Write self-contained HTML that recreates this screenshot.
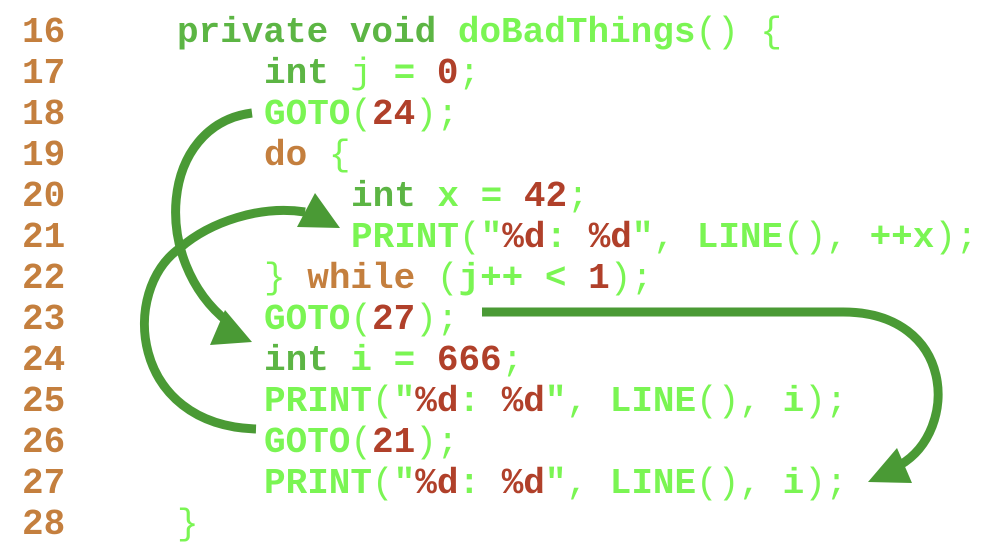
<!DOCTYPE html>
<html><head><style>
html,body{margin:0;padding:0;background:#fff;width:1005px;height:541px;overflow:hidden}
.c{position:absolute;left:0;top:0;font-family:"Liberation Mono",monospace;font-size:36px;line-height:41px;color:#7af553;font-weight:bold}
.c>div{position:relative;height:41px}
.c span{white-space:pre}
.l{position:absolute;left:22px;color:#c47f3e}
.k{color:#5cb544}
.n{color:#b0402a}
.w{color:#c47f3e}
.p{font-weight:normal}
svg{position:absolute;left:0;top:0}
</style></head><body>
<div class="c" style="top:12px"><div><span class="l">16</span><span style="position:absolute;left:177px"><span class="k">private void</span> doBadThings<span class="p">()</span> <span class="p">{</span></span></div><div><span class="l">17</span><span style="position:absolute;left:264px"><span class="k">int</span> <span class="p">j</span> = <span class="n">0</span><span class="p">;</span></span></div><div><span class="l">18</span><span style="position:absolute;left:264px">GOTO<span class="p">(</span><span class="n">24</span><span class="p">);</span></span></div><div><span class="l">19</span><span style="position:absolute;left:264px"><span class="w">do</span> <span class="p">{</span></span></div><div><span class="l">20</span><span style="position:absolute;left:351px"><span class="k">int</span> x = <span class="n">42</span><span class="p">;</span></span></div><div><span class="l">21</span><span style="position:absolute;left:351px">PRINT<span class="p">(</span>"<span class="n">%d</span>: <span class="n">%d</span>"<span class="p">,</span> LINE<span class="p">(),</span> ++x<span class="p">);</span></span></div><div><span class="l">22</span><span style="position:absolute;left:264px"><span class="p">}</span> <span class="w">while</span> <span class="p">(</span>j++ &lt; <span class="n">1</span><span class="p">);</span></span></div><div><span class="l">23</span><span style="position:absolute;left:264px">GOTO<span class="p">(</span><span class="n">27</span><span class="p">);</span></span></div><div><span class="l">24</span><span style="position:absolute;left:264px"><span class="k">int</span> i = <span class="n">666</span><span class="p">;</span></span></div><div><span class="l">25</span><span style="position:absolute;left:264px">PRINT<span class="p">(</span>"<span class="n">%d</span>: <span class="n">%d</span>"<span class="p">,</span> LINE<span class="p">(),</span> i<span class="p">);</span></span></div><div><span class="l">26</span><span style="position:absolute;left:264px">GOTO<span class="p">(</span><span class="n">21</span><span class="p">);</span></span></div><div><span class="l">27</span><span style="position:absolute;left:264px">PRINT<span class="p">(</span>"<span class="n">%d</span>: <span class="n">%d</span>"<span class="p">,</span> LINE<span class="p">(),</span> i<span class="p">);</span></span></div><div><span class="l">28</span><span style="position:absolute;left:177px"><span class="p">}</span></span></div></div>
<svg width="1005" height="541" viewBox="0 0 1005 541">
<g fill="none" stroke="#4a9a35" stroke-width="9">
<path d="M252 113 C160 125 150 260 228 322"/>
<path d="M256 429 C130 425 120 290 180 248 C210 222 260 205 305 212"/>
<path d="M482 312 L843 312 C955 312 960 430 900 465"/>
</g>
<g fill="#4a9a35">
<polygon points="210,345 252,342 225,310"/>
<polygon points="340,228 297,227 315,193"/>
<polygon points="868,482 912,483 897,448"/>
</g>
</svg>
</body></html>
